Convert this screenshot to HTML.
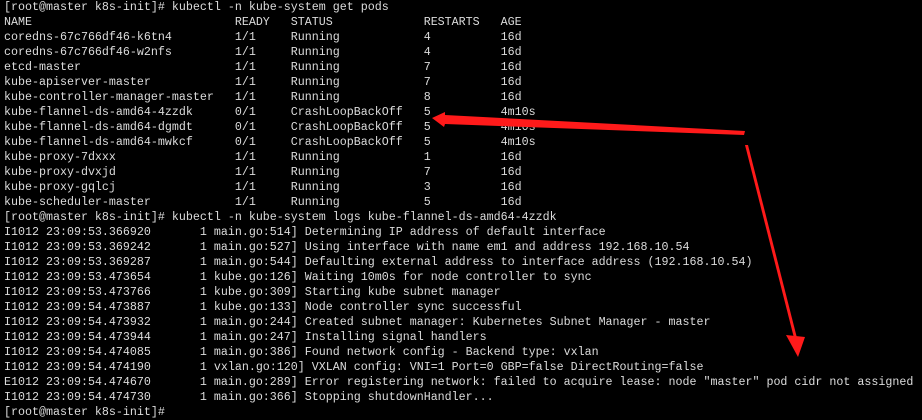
<!DOCTYPE html>
<html><head><meta charset="utf-8"><style>
html,body{margin:0;padding:0;background:#000;width:922px;height:419px;overflow:hidden}
pre{position:absolute;left:4px;top:0;margin:0;font-family:"Liberation Mono",monospace;font-size:11.67px;line-height:15px;color:#dcdcdc}
svg{position:absolute;left:0;top:0}
</style></head><body>
<pre>[root@master k8s-init]# kubectl -n kube-system get pods
NAME                             READY   STATUS             RESTARTS   AGE
coredns-67c766df46-k6tn4         1/1     Running            4          16d
coredns-67c766df46-w2nfs         1/1     Running            4          16d
etcd-master                      1/1     Running            7          16d
kube-apiserver-master            1/1     Running            7          16d
kube-controller-manager-master   1/1     Running            8          16d
kube-flannel-ds-amd64-4zzdk      0/1     CrashLoopBackOff   5          4m10s
kube-flannel-ds-amd64-dgmdt      0/1     CrashLoopBackOff   5          4m10s
kube-flannel-ds-amd64-mwkcf      0/1     CrashLoopBackOff   5          4m10s
kube-proxy-7dxxx                 1/1     Running            1          16d
kube-proxy-dvxjd                 1/1     Running            7          16d
kube-proxy-gqlcj                 1/1     Running            3          16d
kube-scheduler-master            1/1     Running            5          16d
[root@master k8s-init]# kubectl -n kube-system logs kube-flannel-ds-amd64-4zzdk
I1012 23:09:53.366920       1 main.go:514] Determining IP address of default interface
I1012 23:09:53.369242       1 main.go:527] Using interface with name em1 and address 192.168.10.54
I1012 23:09:53.369287       1 main.go:544] Defaulting external address to interface address (192.168.10.54)
I1012 23:09:53.473654       1 kube.go:126] Waiting 10m0s for node controller to sync
I1012 23:09:53.473766       1 kube.go:309] Starting kube subnet manager
I1012 23:09:54.473887       1 kube.go:133] Node controller sync successful
I1012 23:09:54.473932       1 main.go:244] Created subnet manager: Kubernetes Subnet Manager - master
I1012 23:09:54.473944       1 main.go:247] Installing signal handlers
I1012 23:09:54.474085       1 main.go:386] Found network config - Backend type: vxlan
I1012 23:09:54.474190       1 vxlan.go:120] VXLAN config: VNI=1 Port=0 GBP=false DirectRouting=false
E1012 23:09:54.474670       1 main.go:289] Error registering network: failed to acquire lease: node "master" pod cidr not assigned
I1012 23:09:54.474730       1 main.go:366] Stopping shutdownHandler...
[root@master k8s-init]#</pre>
<svg width="922" height="419" viewBox="0 0 922 419">
<polygon points="432,118 445,112 445,115 745,131 744,135 445,124 444,127" fill="#ff1a1a"/>
<polygon points="745,145 748,145 797,338 794,338" fill="#ff1a1a"/>
<polygon points="786,335 805,337 798,357" fill="#ff1a1a"/>
</svg>
</body></html>
